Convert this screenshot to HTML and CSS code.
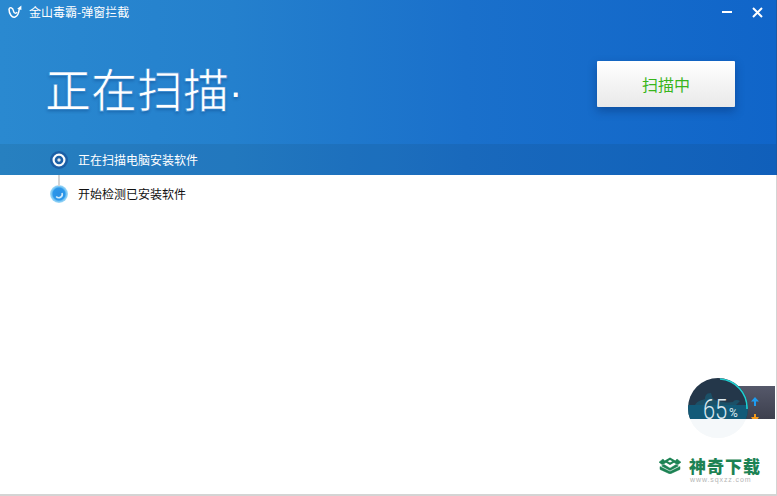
FILE: index.html
```html
<!DOCTYPE html>
<html lang="zh-CN">
<head>
<meta charset="utf-8">
<title>金山毒霸-弹窗拦截</title>
<link rel="stylesheet" href="styles.css">
</head>
<body>
<div class="app">
  <header class="hero">
    <div class="titlebar">
      <div class="brand">
        <svg class="logo" width="14" height="14" viewBox="0 0 14 14"><path d="M1 4 C1 9 4 13 7 12 C9.5 11 11 7 11.3 3.5" fill="none" stroke="#fff" stroke-width="1.5"/><path d="M1 4 C2 1.5 5 3 5.5 6 C6 8.5 8 9 9 7" fill="none" stroke="#fff" stroke-width="1.4"/><path d="M9.2 3.8 L13.4 0.6 L13.4 5 Z" fill="#fff"/></svg>
        <span class="title">金山毒霸-弹窗拦截</span>
      </div>
      <div class="winctl">
        <span class="min"></span>
        <svg class="close" width="11" height="11" viewBox="0 0 11 11"><path d="M1 1 L10 10 M10 1 L1 10" stroke="#fff" stroke-width="2"/></svg>
      </div>
    </div>
    <div class="headline">
      <h1 class="heading">正在扫描<span class="dots">·</span></h1>
      <button class="scan-btn">扫描中</button>
    </div>
    <div class="band">
      <svg class="step-icon" width="18" height="18" viewBox="0 0 18 18"><circle cx="9" cy="9" r="9" fill="#1b5fa6"/><circle cx="9" cy="9" r="5.4" fill="none" stroke="#f8fbfd" stroke-width="2.2"/><circle cx="9" cy="9" r="1.7" fill="#dfe6ec"/></svg>
      <span class="step-text">正在扫描电脑安装软件</span>
    </div>
  </header>
  <main class="steps">
    <div class="connector"></div>
    <div class="step">
      <svg class="step-icon" width="18" height="18" viewBox="0 0 18 18"><defs><radialGradient id="orb" cx="50%" cy="50%" r="50%"><stop offset="0" stop-color="#2a8fe4"/><stop offset="0.66" stop-color="#2b97ea"/><stop offset="0.8" stop-color="#72c2f2"/><stop offset="1" stop-color="#a6dcf8"/></radialGradient></defs><circle cx="9" cy="9" r="9" fill="url(#orb)"/><path d="M12 8 A3.4 3.4 0 0 1 6.2 11.4" fill="none" stroke="#cfeafb" stroke-width="1.6"/></svg>
      <span class="step-text dark">开始检测已安装软件</span>
    </div>
  </main>
  <aside class="widget">
    <div class="widget-panel">
      <svg width="8" height="9" viewBox="0 0 8 9"><path d="M4 0 L8 4.5 H5 V9 H3 V4.5 H0 Z" fill="#1e9cf0"/></svg>
      <svg width="8" height="9" viewBox="0 0 8 9"><path d="M3 0 H5 V3 H8 L4 9 L0 3 H3 Z" fill="#f39a1c"/></svg>
    </div>
    <div class="gauge">
      <svg class="gauge-art" width="60" height="60" viewBox="0 0 60 60"><defs><clipPath id="disc"><circle cx="30" cy="30" r="30"/></clipPath></defs><g clip-path="url(#disc)"><rect width="60" height="60" fill="#24374a"/><rect y="27" width="60" height="33" fill="#135a78"/><path d="M7 27 C10 22 15 22 17 21 C17 18 18 15 23 15 C24 18 24 20 27 22 C34 24 38 25 45 24 C46 22 49 21 52 23 L48 27 Z" fill="#1b5168"/></g><path d="M32 1 A29 29 0 0 1 59 31" fill="none" stroke="#1fcfd0" stroke-width="1.6"/></svg>
      <span class="pct">65</span>
      <span class="pct-sign">%</span>
    </div>
    <div class="widget-cover"></div>
  </aside>
  <div class="watermark">
    <svg class="wm-logo" width="22" height="17" viewBox="0 0 22 17"><path fill-rule="evenodd" d="M11 0.5 L17.5 4.2 L11 8 L4.5 4.2 Z M11 3 L8.6 4.2 L11 5.6 L13.4 4.2 Z" fill="#1d8354"/><path d="M4 2 L0 5.2 L3.4 7.8 L7 5.4 Z M18 2 L22 5.2 L18.6 7.8 L15 5.4 Z M5 7.6 L11 11.2 L17 7.6 L19.4 9 L11 13.4 L2.6 9 Z M1 9.6 L11 14.6 L21 9.6 L21 12.4 L11 17 L1 12.4 Z" fill="#1d8354" stroke="#1d8354" stroke-width=".5"/></svg>
    <div class="wm-text">
      <span class="wm-name">神奇下载</span>
      <span class="wm-url">www.sqxzz.com</span>
    </div>
  </div>
</div>
</body>
</html>
```
FILE: styles.css
```css
* { box-sizing: border-box; }
html, body { margin: 0; padding: 0; }
body { width: 777px; height: 496px; overflow: hidden; background: #fff; font-family: "Noto Sans CJK SC", "Liberation Sans", sans-serif; }
.app { position: relative; width: 777px; height: 496px; display: flex; flex-direction: column; border-bottom: 2px solid #d4d4d4; overflow: hidden; background: #fff; }
.hero { height: 175px; flex: none; display: flex; flex-direction: column; border-right: 1px solid #175aa6; background: linear-gradient(90deg, #2a89d0 0%, #2480cd 30%, #1a70cb 60%, #1065c9 100%); }
.titlebar { height: 24px; display: flex; justify-content: space-between; align-items: center; padding: 0 13px 0 8px; }
.brand { display: flex; align-items: center; gap: 7px; }
.logo { display: block; }
.title { font-size: 12px; line-height: 24px; color: #fff; }
.winctl { display: flex; align-items: center; gap: 20px; }
.min { display: block; width: 10px; height: 2px; background: #fff; }
.close { display: block; }
.headline { flex: 1; display: flex; justify-content: space-between; padding: 0 41px 0 45px; align-items: flex-start; }
.heading { margin: 34px 0 0; font-size: 46px; line-height: 58px; font-weight: 400; color: #fff; -webkit-text-stroke: .7px #2a84cf; paint-order: fill stroke; text-shadow: 0 2px 3px rgba(0,40,100,.3); }
.dots { font-family: "Liberation Sans", sans-serif; font-size: 40px; font-weight: 400; vertical-align: 1px; -webkit-text-stroke: 0; }
.scan-btn { margin-top: 37px; width: 138px; height: 46px; border: 0; border-radius: 1px; background: linear-gradient(#fff, #e9e9e9); color: #38b51c; font: 400 16px "Noto Sans CJK SC", sans-serif; box-shadow: 0 4px 10px rgba(0,30,80,.35); }
.band { height: 31px; flex: none; display: flex; align-items: center; padding-left: 50px; gap: 10px; background: rgba(20,50,60,.1); }
.step-icon { width: 18px; height: 18px; flex: none; display: block; }
.step-text { font-size: 12px; line-height: 18px; color: #fff; }
.step-text.dark { color: #111; }
.steps { position: relative; flex: 1; padding: 10px 0 0 50px; border-right: 1px solid #d4d4d4; }
.connector { position: absolute; left: 58px; top: 0; width: 2px; height: 11px; background: #d4d4d4; }
.step { display: flex; align-items: center; gap: 10px; }
.widget { position: absolute; left: 688px; top: 378px; width: 87px; height: 60px; }
.widget-panel { position: absolute; left: 30px; top: 8px; width: 57px; height: 33px; padding: 11px 0 0 33px; background: linear-gradient(#55586a, #3d404e); display: flex; flex-direction: column; gap: 8px; overflow: hidden; }
.widget-panel svg { display: block; flex: none; }
.gauge { position: absolute; left: 0; top: 0; width: 60px; height: 60px; }
.gauge-art { display: block; }
.pct { position: absolute; left: 15px; top: 20px; color: #dce8ef; font: 300 28px/24px "Roboto", sans-serif; transform: scaleX(.78); transform-origin: 0 0; }
.pct-sign { position: absolute; left: 41px; top: 28px; color: #dce8ef; font: 400 12px/14px "Roboto", sans-serif; }
.widget-cover { position: absolute; left: 0; top: 41px; width: 85px; height: 19px; background: rgba(255,255,255,.96); }
.watermark { position: absolute; left: 659px; top: 456px; display: flex; gap: 8px; align-items: flex-start; }
.wm-logo { display: block; margin-top: 1px; }
.wm-text { display: flex; flex-direction: column; }
.wm-name { font-size: 17px; line-height: 19px; font-weight: 900; letter-spacing: 1px; color: #1d8354; }
.wm-url { font-size: 7px; line-height: 9px; letter-spacing: .9px; color: #b5b5b5; font-family: "Liberation Sans", sans-serif; margin-left: 1px; }
```
